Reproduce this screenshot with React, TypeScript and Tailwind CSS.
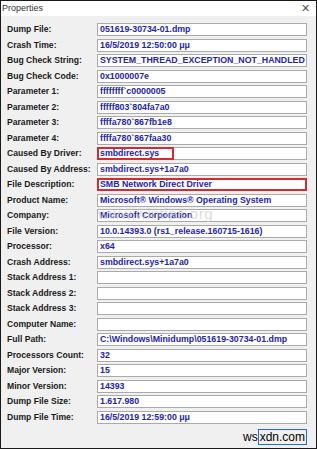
import React from "react";

const rows: { label: string; value: string; mark?: "partial" | "full" }[] = [
  { label: "Dump File:", value: "051619-30734-01.dmp" },
  { label: "Crash Time:", value: "16/5/2019 12:50:00 μμ" },
  { label: "Bug Check String:", value: "SYSTEM_THREAD_EXCEPTION_NOT_HANDLED" },
  { label: "Bug Check Code:", value: "0x1000007e" },
  { label: "Parameter 1:", value: "ffffffff`c0000005" },
  { label: "Parameter 2:", value: "fffff803`804fa7a0" },
  { label: "Parameter 3:", value: "ffffa780`867fb1e8" },
  { label: "Parameter 4:", value: "ffffa780`867faa30" },
  { label: "Caused By Driver:", value: "smbdirect.sys", mark: "partial" },
  { label: "Caused By Address:", value: "smbdirect.sys+1a7a0" },
  { label: "File Description:", value: "SMB Network Direct Driver", mark: "full" },
  { label: "Product Name:", value: "Microsoft® Windows® Operating System" },
  { label: "Company:", value: "Microsoft Corporation" },
  { label: "File Version:", value: "10.0.14393.0 (rs1_release.160715-1616)" },
  { label: "Processor:", value: "x64" },
  { label: "Crash Address:", value: "smbdirect.sys+1a7a0" },
  { label: "Stack Address 1:", value: "" },
  { label: "Stack Address 2:", value: "" },
  { label: "Stack Address 3:", value: "" },
  { label: "Computer Name:", value: "" },
  { label: "Full Path:", value: "C:\\Windows\\Minidump\\051619-30734-01.dmp" },
  { label: "Processors Count:", value: "32" },
  { label: "Major Version:", value: "15" },
  { label: "Minor Version:", value: "14393" },
  { label: "Dump File Size:", value: "1.617.980" },
  { label: "Dump File Time:", value: "16/5/2019 12:59:00 μμ" },
];

export default function App() {
  return (
    <div
      className="relative w-[317px] h-[449px] border border-[#1a1a1a] bg-[#f0f0f0] flex flex-col overflow-hidden"
      style={{ fontFamily: '"Liberation Sans", Arial, sans-serif' }}
    >
      <div className="h-[15px] bg-white flex items-center justify-between pl-[1px] pr-[6px] shrink-0">
        <span className="text-[9px] text-[#333] leading-none">Properties</span>
        <span className="text-[11px] text-[#555] leading-none">✕</span>
      </div>
      <div className="flex flex-col pt-[6px] pl-[6px]">
        {rows.map((r) => (
          <div key={r.label} className="h-[15.5px] flex items-center">
            <div className="w-[90px] text-[8.6px] font-bold text-[#1a1a1a] leading-none whitespace-nowrap">
              {r.label}
            </div>
            <div className="relative w-[210px] h-[13px] bg-white border border-[#aaaaaa] flex items-center pl-[2px]">
              <span className="text-[8.8px] font-bold text-[#2424a8] leading-none whitespace-nowrap">
                {r.value}
              </span>
              {r.mark === "partial" && (
                <div className="absolute left-[-1px] top-[-1px] bottom-[-1px] w-[77px] border-2 border-[#d42a30]" />
              )}
              {r.mark === "full" && (
                <div className="absolute left-[-1px] top-[-1px] bottom-[-1px] right-[-1px] border-2 border-[#d42a30]" />
              )}
            </div>
          </div>
        ))}
      </div>
      <div className="absolute left-[97px] top-[205px] text-[15px] text-[#c4c4c4] opacity-60 leading-none pointer-events-none tracking-[0.5px]">
        www.wintips.org
      </div>
      <div className="absolute right-[9px] bottom-[3px] flex items-center text-[12px] text-black leading-none">
        <span>ws</span>
        <span className="border border-[#2a6ac8] px-[1px] py-[1px]">xdn.com</span>
      </div>
    </div>
  );
}
